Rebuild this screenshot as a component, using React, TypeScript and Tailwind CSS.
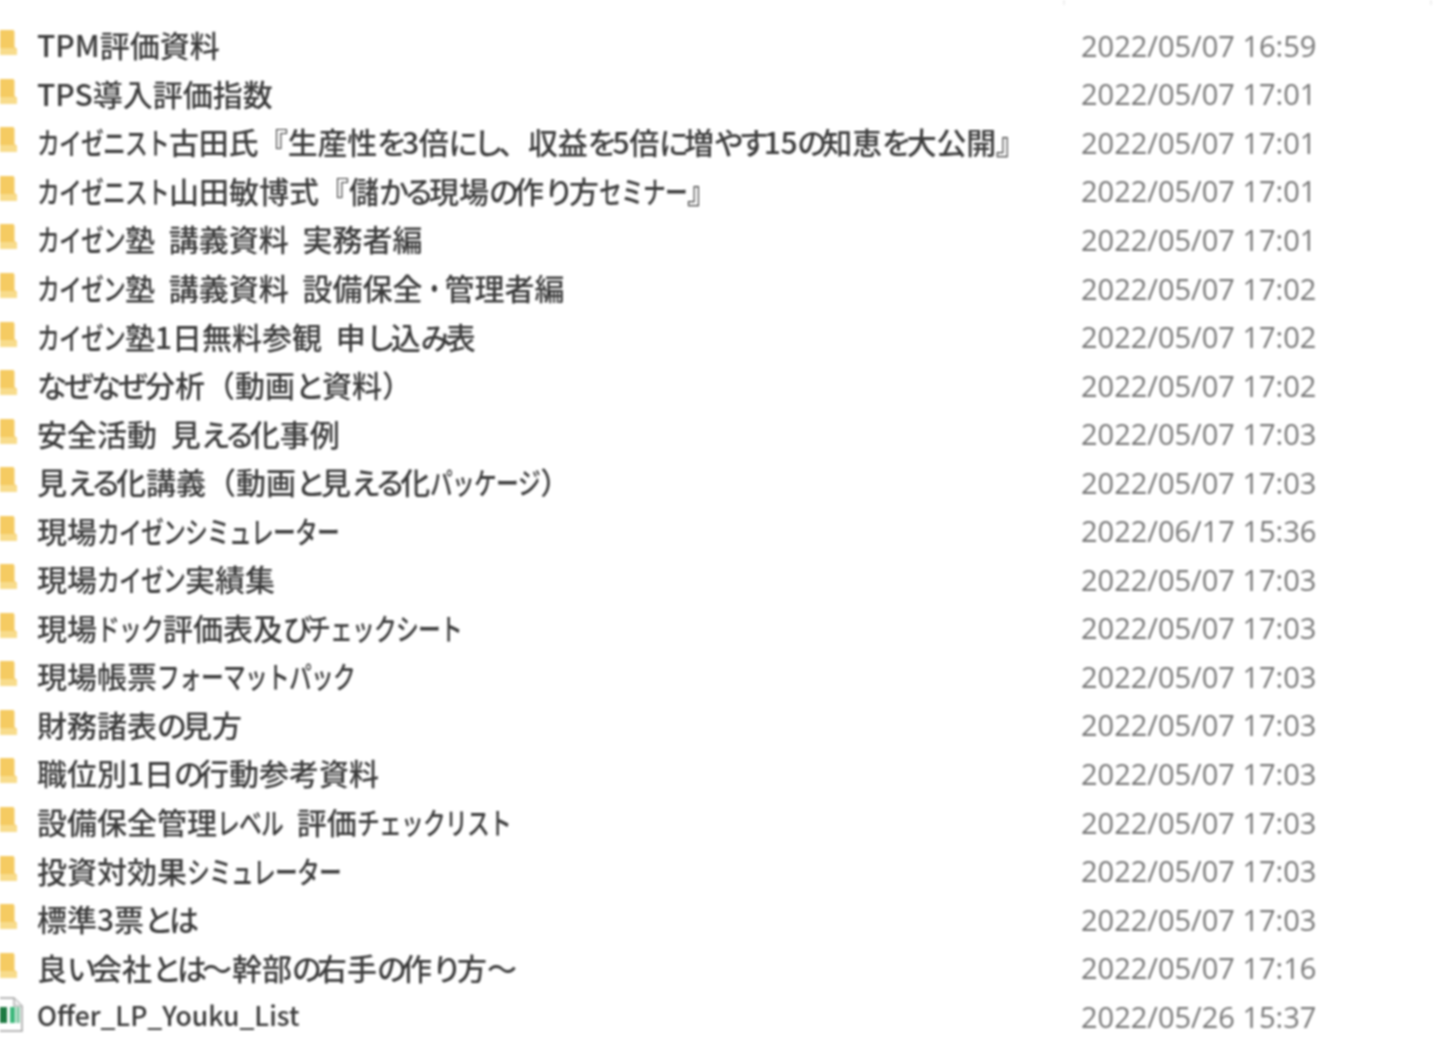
const rows = [
  { name: "TPM評価資料", date: "2022/05/07 16:59" },
  { name: "TPS導入評価指数", date: "2022/05/07 17:01" },
  { name: "カイゼニスト古田氏『生産性を3倍にし、収益を5倍に増やす15の知恵を大公開』", date: "2022/05/07 17:01", tight: true },
  { name: "カイゼニスト山田敏博式『儲かる現場の作り方セミナー』", date: "2022/05/07 17:01" },
  { name: "カイゼン塾 講義資料 実務者編", date: "2022/05/07 17:01" },
  { name: "カイゼン塾 講義資料 設備保全・管理者編", date: "2022/05/07 17:02" },
  { name: "カイゼン塾1日無料参観 申し込み表", date: "2022/05/07 17:02" },
  { name: "なぜなぜ分析（動画と資料）", date: "2022/05/07 17:02", loose: true },
  { name: "安全活動 見える化事例", date: "2022/05/07 17:03" },
  { name: "見える化講義（動画と見える化パッケージ）", date: "2022/05/07 17:03" },
  { name: "現場カイゼンシミュレーター", date: "2022/06/17 15:36" },
  { name: "現場カイゼン実績集", date: "2022/05/07 17:03" },
  { name: "現場ドック評価表及びチェックシート", date: "2022/05/07 17:03" },
  { name: "現場帳票フォーマットパック", date: "2022/05/07 17:03" },
  { name: "財務諸表の見方", date: "2022/05/07 17:03" },
  { name: "職位別1日の行動参考資料", date: "2022/05/07 17:03" },
  { name: "設備保全管理レベル 評価チェックリスト", date: "2022/05/07 17:03" },
  { name: "投資対効果シミュレーター", date: "2022/05/07 17:03" },
  { name: "標準3票とは", date: "2022/05/07 17:03" },
  { name: "良い会社とは～幹部の右手の作り方～", date: "2022/05/07 17:16" },
  { name: "Offer_LP_Youku_List", date: "2022/05/26 15:37", file: true },
];

function FolderIcon() {
  return (
    <svg className="mb-[4px] h-7 w-[17px] shrink-0" viewBox="0 0 17 28">
      <path d="M0 1h13.5l1 2v15l2.5 2v6H0z" fill="#f5cb62" />
      <path d="M0 19h14l3 2v5H0z" fill="#f8dc8c" />
    </svg>
  );
}

function SheetIcon() {
  return (
    <svg className="mb-[3px] h-9 w-6 shrink-0" viewBox="0 0 24 36">
      <path d="M-2 1h16l8 8v25H-2z" fill="#fff" stroke="#a0a0a0" strokeWidth="1.5" />
      <path d="M14 1v8h8" fill="#f0f0f0" stroke="#a0a0a0" strokeWidth="1.2" />
      <rect x="0" y="10" width="7" height="16" fill="#1d7a42" />
      <rect x="10" y="10" width="5" height="16" fill="#3fb87c" />
      <rect x="16" y="10" width="4" height="16" fill="#8fcfae" />
    </svg>
  );
}

// カタカナは幅の狭い書体に見えるので1字ずつ横に潰す、ひらがなは字間だけ詰める
function Name({ text, loose }: { text: string; loose?: boolean }) {
  const parts = text.split(/([ァ-ヶー・]+|[ぁ-ん]+)/);
  return (
    <>
      {parts.map((p, i) => {
        if (i % 2 === 0) return <span key={i}>{p}</span>;
        if (/[ぁ-ん]/.test(p)) {
          return (
            <span key={i} className={loose ? "tracking-[-3px]" : "tracking-[-5px]"}>
              {p}
            </span>
          );
        }
        return (
          <span key={i}>
            {Array.from(p).map((c, j) => (
              <span key={j} className="inline-block w-[22px] origin-left scale-x-[0.76]">
                {c}
              </span>
            ))}
          </span>
        );
      })}
    </>
  );
}

export default function App() {
  return (
    <div className="h-[1052px] w-[1434px] overflow-hidden bg-white blur-[0.8px]">
      <div className="ml-[1063px] h-[5px] w-[369px] border-x-2 border-[#f0f0f0]" />
      <div className="pt-[16px]">
        {rows.map((r) => (
          <div key={r.name + r.date} className="flex h-[48.55px] items-center">
            <div className="flex w-[37px] shrink-0 items-center">
              {r.file ? <SheetIcon /> : <FolderIcon />}
            </div>
            <div
              className={clsxName(r.file, r.tight)}
            >
              <Name text={r.name} loose={r.loose} />
            </div>
            <div className="whitespace-nowrap font-['Open_Sans',sans-serif] text-[29px] leading-none text-[#777]">
              {r.date}
            </div>
          </div>
        ))}
      </div>
    </div>
  );
}

function clsxName(file?: boolean, tight?: boolean) {
  const base =
    "mb-[2px] w-[1044px] shrink-0 whitespace-nowrap font-['Noto_Sans_CJK_JP',sans-serif] font-medium leading-none text-[#3a3a3a]";
  if (file) return base + " text-[26.5px]";
  if (tight) return base + " text-[30px] tracking-[-0.3px]";
  return base + " text-[30px] [word-spacing:7px]";
}
